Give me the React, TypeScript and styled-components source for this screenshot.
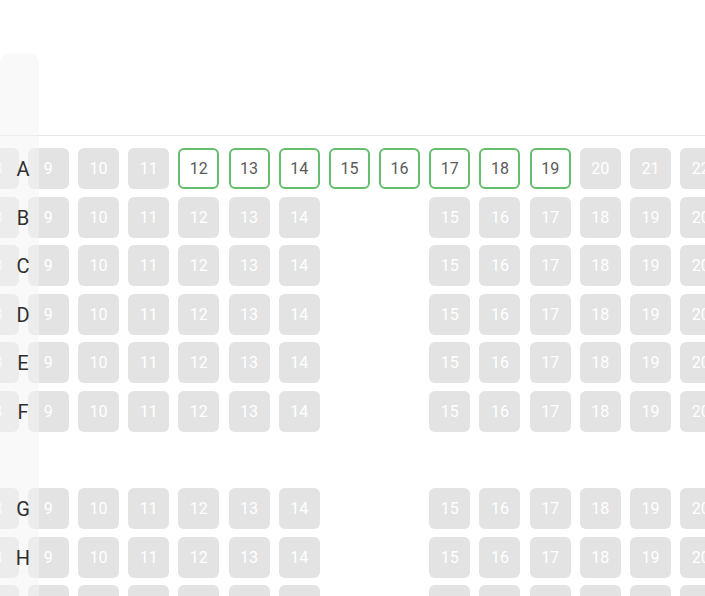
import React from "react";
import styled, { createGlobalStyle } from "styled-components";

const GlobalStyle = createGlobalStyle`
  html, body {
    margin: 0;
    padding: 0;
    background: #ffffff;
  }
  body {
    font-family: Roboto, "Noto Sans", "Liberation Sans", sans-serif;
  }
`;

const SEAT = 41;
const COL_GAP = 9.2;
const ROW_GAP = 7.6;

const Screen = styled.div`
  position: relative;
  width: 705px;
  height: 596px;
  overflow: hidden;
  background: #ffffff;
`;

const Header = styled.div`
  height: 135px;
  border-bottom: 1px solid #e6e6e6;
`;

const SeatMap = styled.div`
  padding-top: 12px;
  overflow: hidden;
`;

/* horizontally scrolled track: seat 8 sits partly off the left edge */
const Track = styled.div`
  display: flex;
  flex-direction: column;
  gap: ${ROW_GAP}px;
  margin-left: -22.4px;
`;

const Row = styled.div`
  display: grid;
  grid-template-columns: repeat(15, ${SEAT}px);
  column-gap: ${COL_GAP}px;
  height: ${SEAT}px;
  flex-shrink: 0;
`;

const Seat = styled.div<{ $free?: boolean }>`
  box-sizing: border-box;
  width: ${SEAT}px;
  height: ${SEAT}px;
  border-radius: 6px;
  display: flex;
  align-items: center;
  justify-content: center;
  font-size: 16px;
  background: ${(p) => (p.$free ? "#ffffff" : "#e3e3e3")};
  border: ${(p) => (p.$free ? "2px solid #64be6c" : "none")};
  color: ${(p) => (p.$free ? "#5a5a5a" : "#ffffff")};
`;

const Gap = styled.div``;

const LabelRail = styled.div`
  position: absolute;
  left: 0;
  top: 53px;
  bottom: 0;
  width: 39px;
  border-radius: 11px 11px 0 0;
  background: rgba(244, 244, 244, 0.55);
  padding-top: 95px;
  display: flex;
  flex-direction: column;
  gap: ${ROW_GAP}px;
  overflow: hidden;
`;

const RowLabel = styled.div`
  flex-shrink: 0;
  height: ${SEAT}px;
  display: flex;
  align-items: center;
  justify-content: center;
  padding-left: 7px;
  padding-top: 1px;
  box-sizing: border-box;
  font-size: 20px;
  color: #2f2f2f;
`;

type Cell = { num: number; free: boolean } | null;

const rowNames = ["A", "B", "C", "D", "E", "F", "", "G", "H", "I"];

function buildRow(name: string): Cell[] | null {
  if (name === "") return null;
  const cells: Cell[] = [];
  for (let i = 0; i < 15; i++) {
    if (name === "A") {
      const num = 8 + i;
      cells.push({ num, free: num >= 12 && num <= 19 });
    } else if (i === 7 || i === 8) {
      cells.push(null);
    } else {
      cells.push({ num: i < 7 ? 8 + i : 6 + i, free: false });
    }
  }
  return cells;
}

export default function App() {
  return (
    <>
      <GlobalStyle />
      <Screen>
        <Header />
        <SeatMap>
          <Track>
            {rowNames.map((name, r) => {
              const cells = buildRow(name);
              return (
                <Row key={r}>
                  {cells &&
                    cells.map((c, i) =>
                      c ? (
                        <Seat key={i} $free={c.free}>
                          {c.num}
                        </Seat>
                      ) : (
                        <Gap key={i} />
                      )
                    )}
                </Row>
              );
            })}
          </Track>
        </SeatMap>
        <LabelRail>
          {rowNames.map((name, r) => (
            <RowLabel key={r}>{name === "I" ? "" : name}</RowLabel>
          ))}
        </LabelRail>
      </Screen>
    </>
  );
}
